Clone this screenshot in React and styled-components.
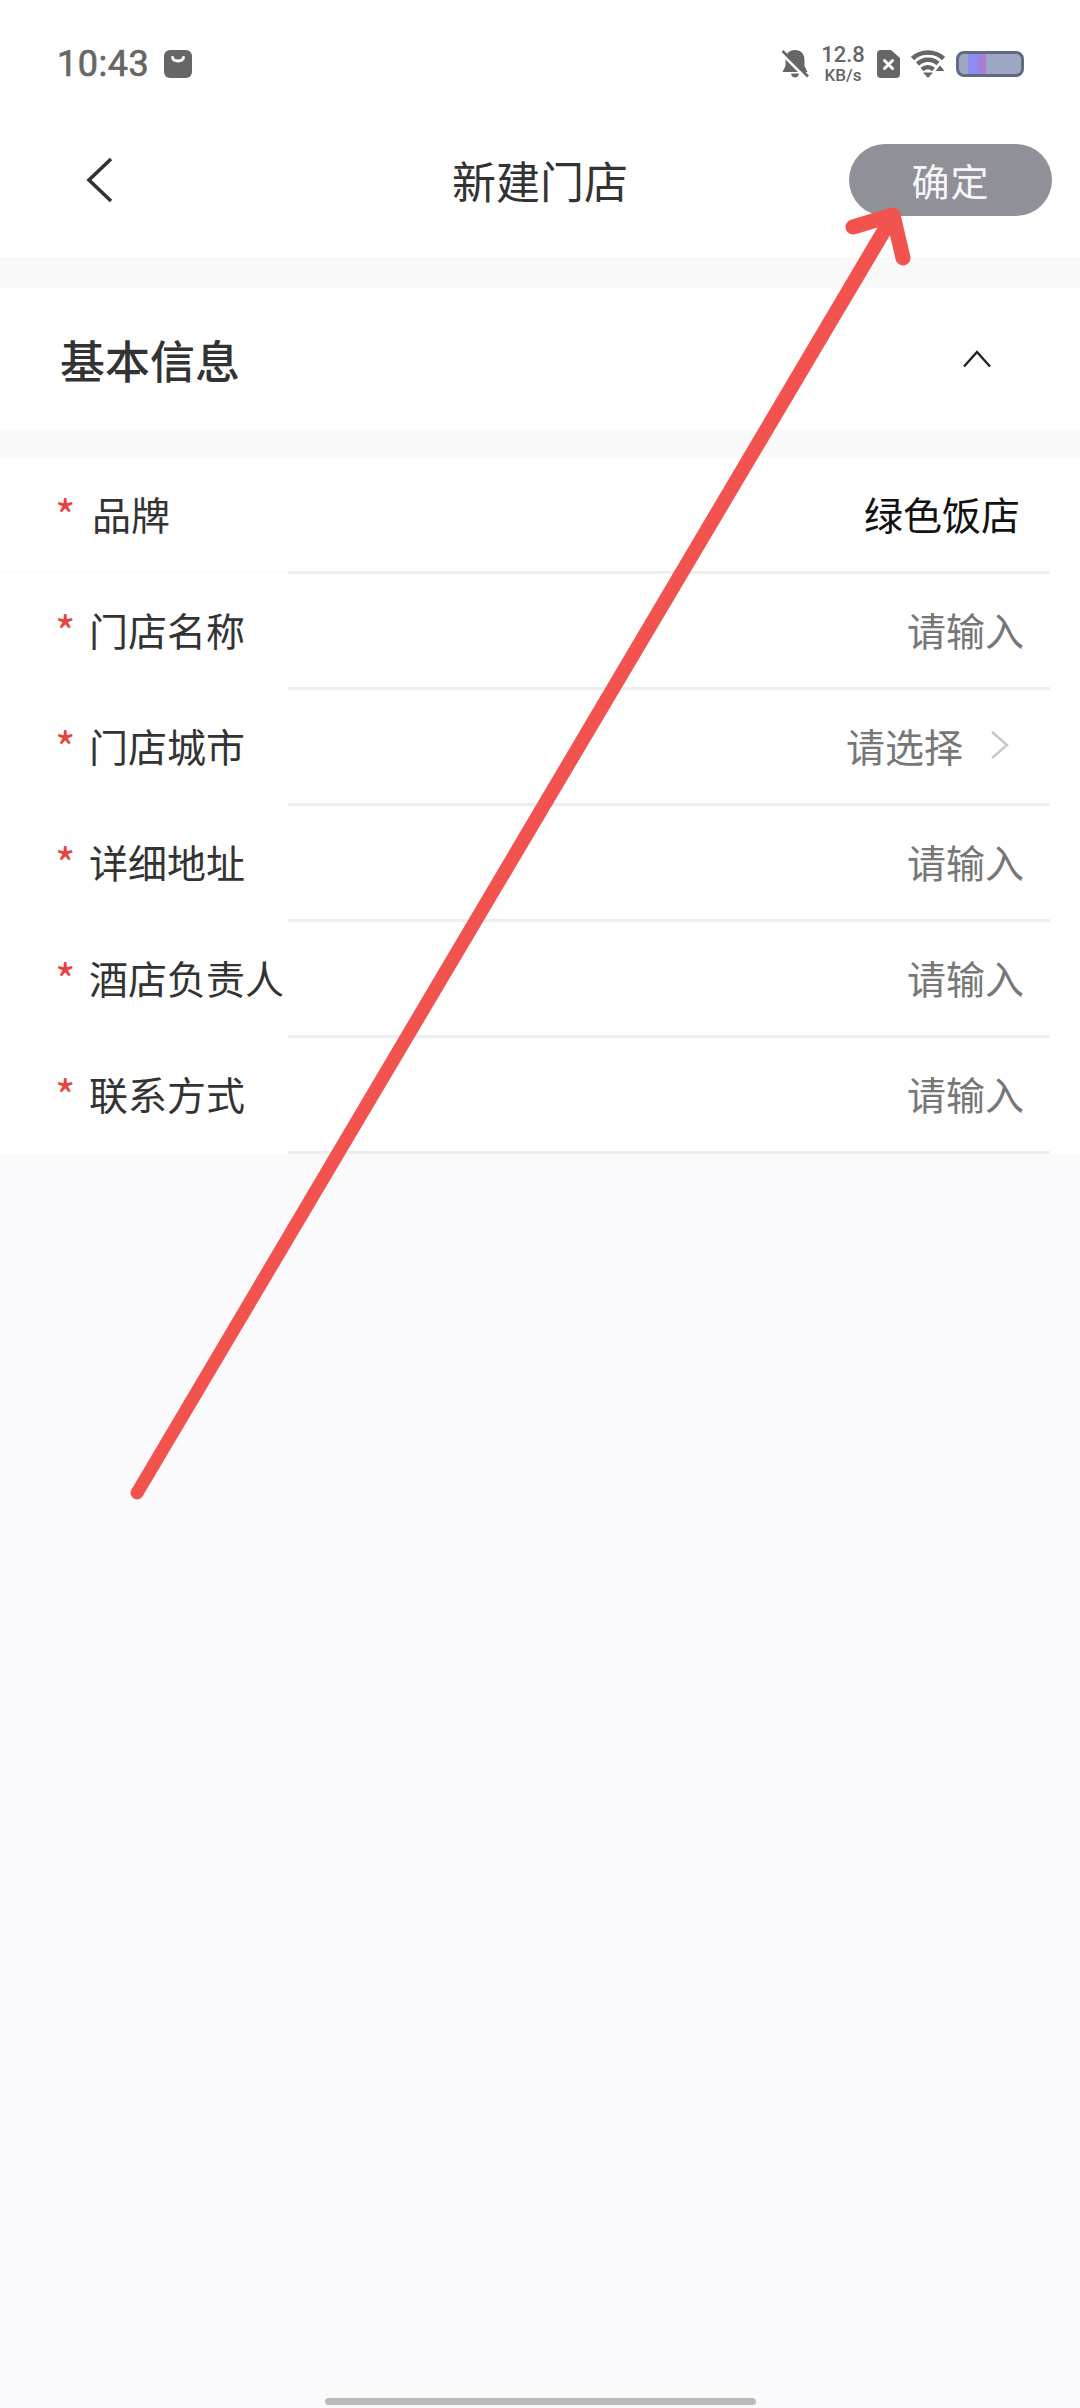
import styled, { createGlobalStyle } from 'styled-components';

const fields = [
    { label: '品牌', value: '绿色饭店', filled: true },
    { label: '门店名称', value: '请输入' },
    { label: '门店城市', value: '请选择', select: true },
    { label: '详细地址', value: '请输入' },
    { label: '酒店负责人', value: '请输入' },
    { label: '联系方式', value: '请输入' },
];

function App() {
    return (
        <Page>
            <GlobalStyle />
            <StatusBar>
                <StatusLeft>
                    <Clock>10:43</Clock>
                    <svg width="28" height="28" viewBox="0 0 28 28">
                        <rect width="28" height="28" rx="6" fill="#666" />
                        <path d="M8.5 7.5c1 4.5 10 4.5 11 0" fill="none" stroke="#fff" strokeWidth="3" strokeLinecap="round" />
                    </svg>
                </StatusLeft>
                <StatusRight>
                    <svg width="28" height="28" viewBox="0 0 28 28">
                        <path d="M14 0c6 0 9.500 4 9.500 10v6l3 6H1.500l3-6v-6C4.500 4 8 0 14 0z" fill="#666" />
                        <path d="M10 23.500h8c-.5 3-2.500 4-4 4s-3.500-1-4-4z" fill="#666" />
                        <path d="M1 3.500l23 23" stroke="#fff" strokeWidth="3.500" />
                        <path d="M1.500 1l25.500 25.500" stroke="#666" strokeWidth="2.600" />
                    </svg>
                    <Speed>
                        <SpeedValue>12.8</SpeedValue>
                        <SpeedUnit>KB/s</SpeedUnit>
                    </Speed>
                    <svg width="23" height="28" viewBox="0 0 23 28">
                        <path d="M4 0h10l9 8v16a4 4 0 0 1-4 4H4a4 4 0 0 1-4-4V4a4 4 0 0 1 4-4z" fill="#666" />
                        <path d="M7.500 10.500l8 8m0-8l-8 8" stroke="#fff" strokeWidth="3" strokeLinecap="round" />
                    </svg>
                    <svg width="34" height="28" viewBox="0 0 34 28">
                        <path d="M1.500 8.500C10 .5 24 .5 32.500 8.500" fill="none" stroke="#666" strokeWidth="4.500" />
                        <path d="M6.500 14c6-5.500 15-5.500 20.500-.5" fill="none" stroke="#666" strokeWidth="4.500" />
                        <path d="M11 19.500c3.500-3 8-3 11.500 0" fill="none" stroke="#666" strokeWidth="4.500" />
                        <path d="M12 22.500h10L17 28z" fill="#666" />
                        <path d="M29 15.500l4.500 5.500h-9z" fill="#666" />
                    </svg>
                    <Battery>
                        <BatteryLevel />
                    </Battery>
                </StatusRight>
            </StatusBar>
            <NavBar>
                <BackSlot>
                    <svg width="28" height="46" viewBox="0 0 28 46">
                        <path d="M25 2L3 23l22 21" fill="none" stroke="#333" strokeWidth="3.600" />
                    </svg>
                </BackSlot>
                <Title>新建门店</Title>
                <ConfirmSlot>
                    <ConfirmButton>确定</ConfirmButton>
                </ConfirmSlot>
            </NavBar>
            <Band $height={31} />
            <SectionHead>
                <SectionTitle>基本信息</SectionTitle>
                <svg width="30" height="18" viewBox="0 0 30 18">
                    <path d="M2 16.500L15 2l13 14.500" fill="none" stroke="#222" strokeWidth="2.400" />
                </svg>
            </SectionHead>
            <Band $height={28} />
            <Form>
                {fields.map((field, index) => (
                    <Field key={field.label}>
                        <Row>
                            <Required>*</Required>
                            <Label $shift={index === 0}>{field.label}</Label>
                            <Value $filled={field.filled}>{field.value}</Value>
                            {field.select && (
                                <Arrow width="20" height="30" viewBox="0 0 20 30">
                                    <path d="M2 2l15 13L2 28" fill="none" stroke="#c8c8c8" strokeWidth="2.400" />
                                </Arrow>
                            )}
                        </Row>
                        <Divider $first={index === 0} />
                    </Field>
                ))}
            </Form>
            <HomeBar />
            <Overlay viewBox="0 0 1080 2408">
                <circle cx="137" cy="1493" r="6.500" fill="#f2534f" />
                <path d="M131.400 1489.700L886 213L899 220L142.600 1496.300Z" fill="#f2534f" />
                <path d="M853 227L893 215L903 258" fill="none" stroke="#f2534f" strokeWidth="15" strokeLinecap="round" strokeLinejoin="round" />
            </Overlay>
        </Page>
    );
}
export default App;

const GlobalStyle = createGlobalStyle`
    body{
        margin: 0;
        background: #fafafc;
        font-family: "Noto Sans CJK SC", "Noto Sans", sans-serif;
    }
`;

const Page = styled.div`
    position: relative;
    width: 1080px;
    height: 2408px;
    overflow: hidden;
    display: flex;
    flex-direction: column;
    background: #fafafc;
`;

const StatusBar = styled.div`
    height: 102px;
    padding: 0 56px 0 57px;
    box-sizing: border-box;
    background: #fff;
    display: flex;
    justify-content: space-between;
    align-items: flex-start;
`;

const StatusLeft = styled.div`
    margin-top: 50px;
    display: flex;
    align-items: center;
    gap: 15px;
`;

const Clock = styled.span`
    font-family: Roboto, sans-serif;
    font-size: 36px;
    font-weight: 400;
    line-height: 28px;
    letter-spacing: 0.5px;
    color: #666;
    -webkit-text-stroke: 0.7px #666;
`;

const StatusRight = styled.div`
    margin-top: 50px;
    display: flex;
    align-items: center;
    height: 28px;
    gap: 11px;
`;

const Speed = styled.div`
    width: 46px;
    display: flex;
    flex-direction: column;
    align-items: center;
    font-family: Roboto, sans-serif;
    font-weight: 500;
    color: #666;
`;

const SpeedValue = styled.span`
    font-size: 22px;
    line-height: 22px;
`;

const SpeedUnit = styled.span`
    font-size: 17px;
    line-height: 17px;
    margin-top: 1px;
`;

const Battery = styled.div`
    width: 68px;
    height: 26px;
    box-sizing: border-box;
    border: 3px solid #5f6b85;
    border-radius: 8px;
    background: #9ea6c4;
    padding-left: 9px;
`;

const BatteryLevel = styled.div`
    width: 18px;
    height: 100%;
    background: linear-gradient(90deg, #8d8df0 0%, #8d8df0 55%, #a77fd6 60%, #a77fd6 100%);
`;

const NavBar = styled.div`
    height: 155px;
    background: #fff;
    display: grid;
    grid-template-columns: 1fr auto 1fr;
    align-items: center;
`;

const BackSlot = styled.div`
    padding-left: 86px;
    display: flex;
`;

const Title = styled.div`
    font-size: 44px;
    line-height: 60px;
    color: #333;
`;

const ConfirmSlot = styled.div`
    display: flex;
    justify-content: flex-end;
    padding-right: 28px;
`;

const ConfirmButton = styled.button`
    width: 203px;
    height: 72px;
    padding: 0;
    border: none;
    border-radius: 36px;
    background: #8f9098;
    color: #f6f6f8;
    font-family: inherit;
    font-size: 38px;
    letter-spacing: 1px;
`;

const Band = styled.div`
    height: ${(props) => props.$height}px;
    background: #f9f9f9;
`;

const SectionHead = styled.div`
    height: 142px;
    padding: 0 88px 0 60px;
    background: #fff;
    display: flex;
    align-items: center;
    justify-content: space-between;
`;

const SectionTitle = styled.div`
    font-size: 45px;
    font-weight: 500;
    color: #333;
`;

const Form = styled.div`
    background: #fff;
`;

const Field = styled.div`
    height: 116px;
    display: flex;
    flex-direction: column;
`;

const Row = styled.div`
    flex: 1;
    padding: 0 56px 4px 55px;
    display: flex;
    align-items: center;
`;

const Required = styled.span`
    width: 34px;
    font-size: 44px;
    line-height: 46px;
    margin-top: 2px;
    color: #e9433f;
`;

const Label = styled.span`
    font-size: 39px;
    color: #333;
    margin-left: ${(props) => (props.$shift ? '3px' : '0')};
`;

const Value = styled.span`
    margin-left: auto;
    font-size: 39px;
    color: ${(props) => (props.$filled ? '#111' : '#777')};
    margin-right: ${(props) => (props.$filled ? '4px' : '0')};
`;

const Arrow = styled.svg`
    margin-left: 27px;
    margin-right: 14px;
`;

const Divider = styled.div`
    height: 3px;
    margin-right: 30px;
    background: ${(props) =>
        props.$first ? 'linear-gradient(90deg, #fbfbfb 0, #fbfbfb 288px, #eeeeee 288px)' : '#eeeeee'};
    margin-left: ${(props) => (props.$first ? '0' : '288px')};
`;

const HomeBar = styled.div`
    width: 431px;
    height: 7px;
    margin: auto auto 3px;
    border-radius: 4px;
    background: #bbbbbb;
`;

const Overlay = styled.svg`
    position: absolute;
    top: 0;
    left: 0;
    width: 1080px;
    height: 2408px;
    pointer-events: none;
`;
